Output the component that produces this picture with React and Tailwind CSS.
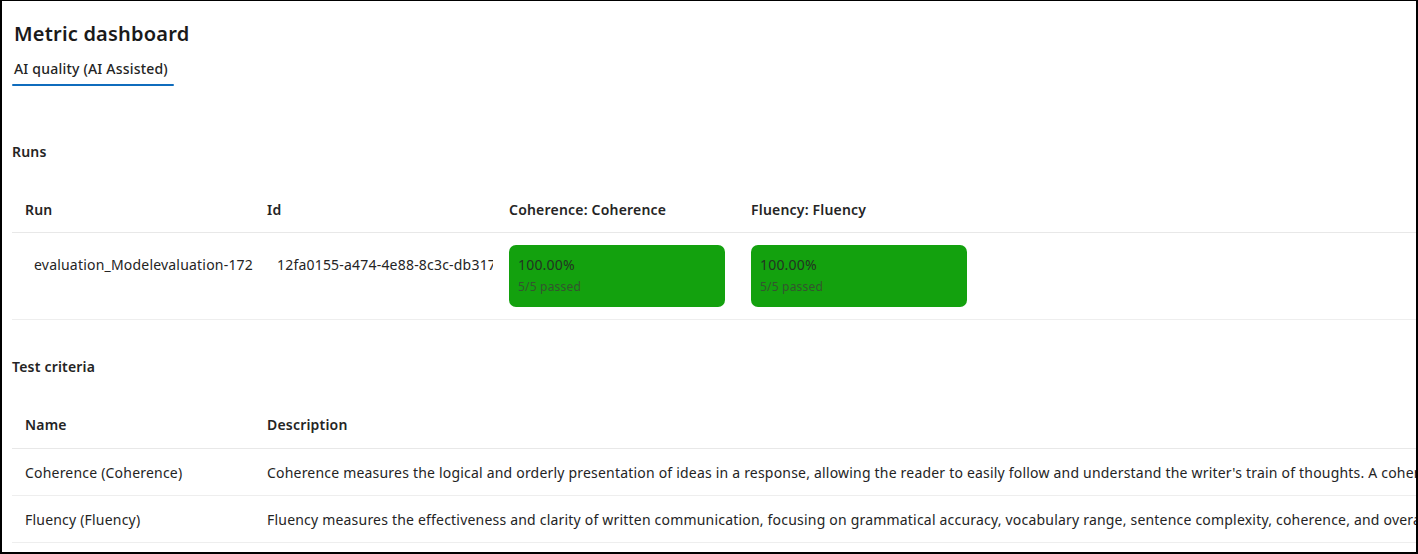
import React from 'react';

const font = { fontFamily: '"Noto Sans", "Open Sans", Arial, sans-serif' };

const runs = [
  {
    run: 'evaluation_Modelevaluation-172',
    id: '12fa0155-a474-4e88-8c3c-db3170e1f3a2',
    metrics: [
      { value: '100.00%', passed: '5/5 passed' },
      { value: '100.00%', passed: '5/5 passed' },
    ],
  },
];

const criteria = [
  {
    name: 'Coherence (Coherence)',
    description:
      "Coherence measures the logical and orderly presentation of ideas in a response, allowing the reader to easily follow and understand the writer's train of thoughts. A coherent answer directly addresses the question with clear connections between sentences and paragraphs.",
  },
  {
    name: 'Fluency (Fluency)',
    description:
      'Fluency measures the effectiveness and clarity of written communication, focusing on grammatical accuracy, vocabulary range, sentence complexity, coherence, and overall readability.',
  },
];

function MetricCell({ metric }) {
  return (
    <div className="px-[13px] py-3">
      <div className="flex h-[62px] w-[216px] flex-col rounded-[7px] bg-[#13a10e] px-[9px] pt-[10px]">
        <span className="text-[14px] leading-[20px] text-[#223322]">{metric.value}</span>
        <span className="mt-[4px] text-[12px] leading-[16px] text-[#33552f]">{metric.passed}</span>
      </div>
    </div>
  );
}

export default function App() {
  return (
    <div
      className="h-[554px] w-[1418px] overflow-hidden border-2 border-t border-black bg-white pl-[10px] tracking-[0.2px] text-[#242424]"
      style={font}
    >
      {/* Header */}
      <h1 className="ml-[2px] mt-[19px] text-[20px] font-semibold leading-[28px] text-[#1a1a1a]">
        Metric dashboard
      </h1>
      <div className="mt-[11px] flex w-[162px] flex-col">
        <span className="px-[2px] text-[14px] font-medium leading-[20px]">AI quality (AI Assisted)</span>
        <span className="mt-[5px] h-[2px] w-[162px] rounded-full bg-[#0f6cbd]" />
      </div>

      {/* Runs */}
      <h2 className="mt-[56px] text-[14px] font-semibold leading-[20px]">Runs</h2>
      <div className="mt-[24px] text-[14px]">
        <div className="grid h-[47px] grid-cols-[242px_242px_242px_242px_1fr] items-center border-b border-[#e8e8e8] font-semibold">
          <div className="pl-[13px]">Run</div>
          <div className="pl-[13px]">Id</div>
          <div className="pl-[13px]">Coherence: Coherence</div>
          <div className="pl-[13px]">Fluency: Fluency</div>
          <div />
        </div>
        {runs.map((r) => (
          <div
            key={r.id}
            className="grid grid-cols-[242px_242px_242px_242px_1fr] items-start border-b border-[#eeeeee] leading-[20px]"
          >
            <div className="whitespace-nowrap pl-[22px] pt-[22px]">{r.run}</div>
            <div className="pl-[23px] pt-[22px]">
              <div className="w-[216px] overflow-hidden whitespace-nowrap">{r.id}</div>
            </div>
            {r.metrics.map((m, i) => (
              <MetricCell key={i} metric={m} />
            ))}
            <div />
          </div>
        ))}
      </div>

      {/* Test criteria */}
      <h2 className="mt-[37px] text-[14px] font-semibold leading-[20px]">Test criteria</h2>
      <div className="mt-[24px] text-[14px]">
        <div className="grid h-[48px] grid-cols-[242px_1fr] items-center border-b border-[#e8e8e8] font-semibold">
          <div className="pl-[13px]">Name</div>
          <div className="pl-[13px]">Description</div>
        </div>
        {criteria.map((c) => (
          <div
            key={c.name}
            className="grid h-[47px] grid-cols-[242px_1fr] items-center border-b border-[#eeeeee]"
          >
            <div className="whitespace-nowrap pl-[13px]">{c.name}</div>
            <div className="overflow-hidden whitespace-nowrap pl-[13px]">{c.description}</div>
          </div>
        ))}
      </div>
    </div>
  );
}
